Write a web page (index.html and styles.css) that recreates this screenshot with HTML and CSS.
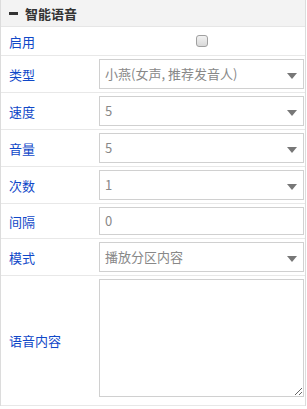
FILE: index.html
```html
<!DOCTYPE html>
<html>
<head>
    <meta charset="UTF-8" />
    <title>智能语音</title>
    <link rel="stylesheet" href="styles.css">
</head>
<body>
    <div class="panel">
        <div class="panel-head">
            <span class="collapse"></span>
            <span>智能语音</span>
        </div>
        <div class="row row-check">
            <label class="name" for="enable">启用</label>
            <div class="value center">
                <input type="checkbox" id="enable" class="check">
            </div>
        </div>
        <div class="row">
            <label class="name">类型</label>
            <div class="value">
                <div class="select">小燕(女声, 推荐发音人)<span class="caret"></span></div>
            </div>
        </div>
        <div class="row">
            <label class="name">速度</label>
            <div class="value">
                <div class="select">5<span class="caret"></span></div>
            </div>
        </div>
        <div class="row">
            <label class="name">音量</label>
            <div class="value">
                <div class="select">5<span class="caret"></span></div>
            </div>
        </div>
        <div class="row">
            <label class="name">次数</label>
            <div class="value">
                <div class="select">1<span class="caret"></span></div>
            </div>
        </div>
        <div class="row">
            <label class="name">间隔</label>
            <div class="value">
                <div class="input">0</div>
            </div>
        </div>
        <div class="row">
            <label class="name">模式</label>
            <div class="value">
                <div class="select">播放分区内容<span class="caret"></span></div>
            </div>
        </div>
        <div class="row row-text">
            <label class="name">语音内容</label>
            <div class="value">
                <textarea class="area"></textarea>
            </div>
        </div>
    </div>
</body>
</html>
```

FILE: styles.css
```css
body {
    margin: 0;
    background: #ffffff;
    font-family: "Noto Sans CJK SC", "Liberation Sans", sans-serif;
    font-size: 13px;
}
.panel {
    width: 304px;
    border-left: 1px solid #dcdcdc;
    border-right: 1px solid #dcdcdc;
}
.panel-head {
    height: 26px;
    background: #f3f3f3;
    border-bottom: 1px solid #e6e6e6;
    display: flex;
    align-items: center;
    padding-left: 8px;
    font-size: 13px;
    font-weight: bold;
    color: #333333;
}
.collapse {
    width: 9px;
    height: 3px;
    background: #333333;
    margin-right: 7px;
}
.row {
    display: flex;
    align-items: center;
    border-bottom: 1px solid #e8e8e8;
}
.row-check {
    height: 28px;
}
.name {
    width: 90px;
    padding-left: 8px;
    color: #1048c8;
    flex-shrink: 0;
}
.value {
    flex: 1;
    padding: 3px 1px 3px 0;
}
.center {
    display: flex;
    justify-content: center;
}
.check {
    appearance: none;
    margin: 0;
    width: 12px;
    height: 12px;
    border: 1px solid #a0a0a0;
    border-radius: 3px;
    background: linear-gradient(#f2f2f2, #d9d9d9);
}
.select, .input {
    position: relative;
    height: 28px;
    line-height: 28px;
    border: 1px solid #d0d0d0;
    padding-left: 5px;
    color: #888888;
    white-space: nowrap;
}
.caret {
    position: absolute;
    right: 6px;
    top: 13px;
    border-left: 5px solid transparent;
    border-right: 5px solid transparent;
    border-top: 6px solid #777777;
}
.input {
    height: 26px;
    line-height: 26px;
}
.row-text .value {
    padding-bottom: 8px;
}
.area {
    display: block;
    box-sizing: border-box;
    width: 100%;
    height: 118px;
    margin: 0;
    border: 1px solid #d0d0d0;
}
```
